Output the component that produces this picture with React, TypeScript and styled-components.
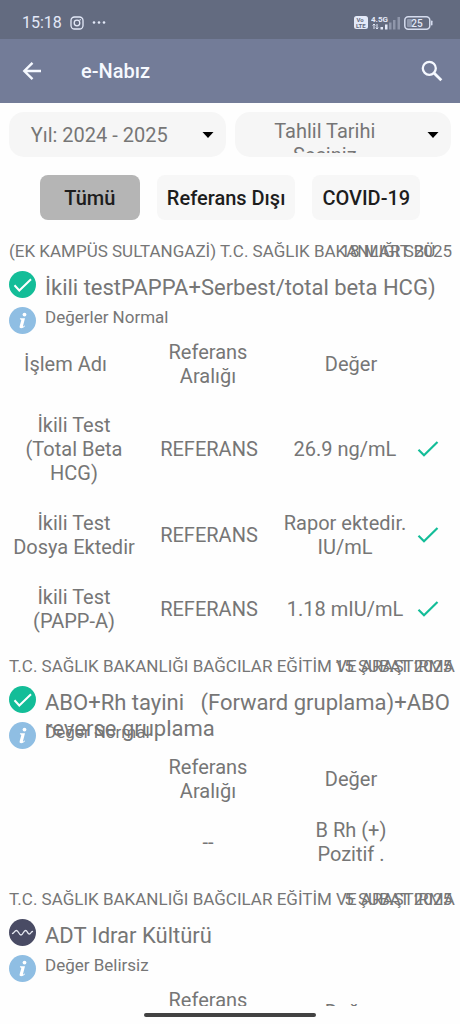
import React from "react";
import styled, { createGlobalStyle } from "styled-components";

const GlobalStyle = createGlobalStyle`
  *, *::before, *::after { box-sizing: border-box; }
  body { margin: 0; background: #fefefe; font-family: Roboto, "Noto Sans", sans-serif; color: #767676; }
  button, select { font-family: inherit; }
`;

const Screen = styled.div`
  display: flex;
  flex-direction: column;
  height: 100vh;
`;

const StatusBar = styled.div`
  display: flex;
  align-items: center;
  justify-content: space-between;
  flex: none;
  height: 39px;
  padding: 6px 27px 0 22px;
  background: #636b80;
  color: #e3e9f8;
`;

const StatusGroup = styled.div<{ $gap: number }>`
  display: flex;
  align-items: center;
  gap: ${(p) => p.$gap}px;
`;

const Clock = styled.span`
  font-size: 16px;
  font-weight: 400;
  line-height: 20px;
`;

const AppBar = styled.header`
  display: flex;
  align-items: center;
  flex: none;
  height: 64px;
  padding: 0 16px 0 20px;
  background: #737c98;
  color: #f6f9ff;
`;

const IconButton = styled.button`
  display: flex;
  padding: 0;
  border: 0;
  background: none;
  color: inherit;
`;

const AppTitle = styled.h1`
  flex: 1;
  margin: 0 0 0 37px;
  font-size: 20px;
  font-weight: 500;
  line-height: 24px;
`;

const Content = styled.main`
  flex: 1;
  min-height: 0;
  overflow-y: auto;
  scrollbar-width: none;
`;

const Filters = styled.div`
  display: flex;
  gap: 9px;
  padding: 9px 9px 0;
`;

const SelectField = styled.label`
  position: relative;
  display: flex;
  align-items: center;
  gap: 20px;
  flex: 1;
  height: 45px;
  padding: 0 12px 0 8px;
  border-radius: 15px;
  background: #f6f6f6;
`;

const SelectText = styled.span<{ $lines: number }>`
  flex: 1;
  height: ${(p) => (p.$lines > 1 ? 36 : 24)}px;
  padding-top: ${(p) => (p.$lines > 1 ? 2 : 0)}px;
  overflow: hidden;
  font-size: 20px;
  line-height: 24px;
  text-align: center;
  white-space: pre-line;
`;

const NativeSelect = styled.select`
  position: absolute;
  inset: 0;
  width: 100%;
  opacity: 0;
`;

const Tabs = styled.div`
  display: flex;
  justify-content: center;
  gap: 17px;
  padding: 18px 9px 21px;
`;

const Tab = styled.button<{ $active?: boolean }>`
  height: 45px;
  min-width: 100px;
  padding: 0 10px;
  border: 0;
  border-radius: 8px;
  background: ${(p) => (p.$active ? "#b5b5b5" : "#f7f7f7")};
  color: #1d1d1d;
  font-size: 20px;
  font-weight: 500;
  line-height: 24px;
`;

const Result = styled.section`
  margin-bottom: 23px;
`;

const Source = styled.div`
  position: relative;
  padding: 0 7px 0 9px;
  font-size: 17px;
  line-height: 20px;
`;

const Hospital = styled.div`
  white-space: nowrap;
`;

const ResultDate = styled.time`
  position: absolute;
  top: 0;
  right: 8px;
`;

const Summary = styled.div`
  display: grid;
  grid-template-columns: 27px 1fr;
  grid-template-rows: 27px 27px;
  gap: 9px;
  padding: 10px 0 6px 9px;
`;

const TestName = styled.h2`
  margin: 0;
  padding-top: 4px;
  font-size: 22px;
  font-weight: 400;
  line-height: 26px;
  white-space: pre-wrap;
`;

const TestStatus = styled.p`
  margin: 0;
  font-size: 17px;
  line-height: 20px;
`;

const Table = styled.table`
  display: block;
  padding: 0 9px;
  font-size: 20px;
  line-height: 24px;
`;

const Head = styled.thead`
  display: block;
`;

const Body = styled.tbody<{ $gap: number }>`
  display: flex;
  flex-direction: column;
  gap: ${(p) => p.$gap}px;
  padding-top: ${(p) => p.$gap - 1}px;
`;

const Row = styled.tr<{ $wide?: boolean }>`
  display: grid;
  align-items: center;
  grid-template-columns: ${(p) => (p.$wide ? "113fr 172fr 114fr 43fr" : "130fr 140fr 132fr 40fr")};
`;

const HeadCell = styled.th`
  padding: 0;
  font-weight: 400;
  text-align: center;
  white-space: pre-line;
`;

const Cell = styled.td`
  padding: 0;
  text-align: center;
  white-space: pre-line;
`;

const CheckCell = styled.td`
  display: flex;
  justify-content: center;
  padding: 0 6px 0 0;
`;

const NavBar = styled.div`
  display: flex;
  justify-content: center;
  flex: none;
  height: 18px;
  padding-top: 7px;
`;

const HomeHandle = styled.div`
  width: 172px;
  height: 4px;
  border-radius: 2px;
  background: #424242;
`;

const InstagramIcon = () => (
  <svg width="14" height="14" viewBox="0 0 14 14" fill="none" stroke="currentColor" strokeWidth="1.3">
    <rect x="1" y="1" width="12" height="12" rx="3.5" />
    <circle cx="7" cy="7" r="2.8" />
    <circle cx="10.2" cy="3.8" r="0.7" fill="currentColor" stroke="none" />
  </svg>
);

const MoreIcon = () => (
  <svg width="14" height="14" viewBox="0 0 14 14" fill="currentColor">
    <circle cx="2" cy="6.5" r="1.3" />
    <circle cx="7" cy="6.5" r="1.3" />
    <circle cx="12" cy="6.5" r="1.3" />
  </svg>
);

const VolteIcon = () => (
  <svg width="14" height="13" viewBox="0 0 14 13">
    <rect width="14" height="13" rx="2.5" fill="#e3e9f8" />
    <text x="2.5" y="6" fontSize="6" fontWeight="700" fill="#636b80">Vo</text>
    <text x="2" y="11.5" fontSize="6" fontWeight="700" fill="#636b80">LTE</text>
  </svg>
);

const SignalIcon = () => (
  <svg width="30" height="14" viewBox="0 0 30 14" fill="#e3e9f8">
    <rect x="9.5" y="11" width="2.5" height="2.5" />
    <rect x="14" y="8.5" width="2.5" height="5" />
    <rect x="18" y="6.5" width="2.5" height="7" opacity=".35" />
    <rect x="22" y="4" width="2.5" height="9.5" opacity=".35" />
    <rect x="26.5" y="1" width="2.5" height="12.5" opacity=".35" />
    <text x="0" y="6" fontSize="8" fontWeight="700">4.5G</text>
    <path d="M3 8v5M1.6 9.4 3 8l1.4 1.4M6 8v5M4.8 11.6 6 13l1.2-1.4" stroke="#e3e9f8" strokeWidth="1" fill="none" />
  </svg>
);

const BatteryIcon = () => (
  <svg width="29" height="14" viewBox="0 0 29 14">
    <rect x="0.8" y="0.8" width="25" height="12.4" rx="3.5" fill="none" stroke="#d5dcee" strokeWidth="1.5" />
    <rect x="3" y="3" width="5" height="8" rx="1" fill="#9098ac" />
    <rect x="27" y="4.5" width="1.5" height="5" rx="0.7" fill="#d5dcee" />
    <text x="13" y="10.5" fontSize="10" fontWeight="500" fill="#e3e9f8" textAnchor="middle">25</text>
  </svg>
);

const BackIcon = () => (
  <svg width="24" height="24" viewBox="0 0 24 24" fill="none" stroke="currentColor" strokeWidth="2.4">
    <path d="M21 12H4.5M12.5 3.8 4.3 12l8.2 8.2" />
  </svg>
);

const SearchIcon = () => (
  <svg width="24" height="24" viewBox="0 0 24 24" fill="none" stroke="currentColor" strokeWidth="2.3">
    <circle cx="9.3" cy="9.3" r="6.5" />
    <path d="m14 14 7.3 7.3" strokeWidth="2.8" />
  </svg>
);

const CaretIcon = () => (
  <svg width="12" height="6" viewBox="0 0 12 6">
    <path d="M0.5 0h11L6 6z" fill="#000" />
  </svg>
);

const NormalIcon = () => (
  <svg width="27" height="27" viewBox="0 0 27 27">
    <circle cx="13.5" cy="13.5" r="13.5" fill="#13bd98" />
    <path d="m5.500 14.300 4.800 5.200L22 8.300" fill="none" stroke="#fff" strokeWidth="2" />
  </svg>
);

const UncertainIcon = () => (
  <svg width="27" height="27" viewBox="0 0 27 27">
    <circle cx="13.5" cy="13.5" r="13.5" fill="#494b64" />
    <path
      d="M3.5 14.500c1.500 0 2-3 4-3s2.500 4.500 4.500 4.500 2.500-4.500 4.500-4.500 2 3.500 3.800 3.500 1.500-2.500 3.200-2.500"
      fill="none"
      stroke="#e6e9f3"
      strokeWidth="1.3"
      strokeLinecap="round"
    />
  </svg>
);

const InfoIcon = () => (
  <svg width="27" height="27" viewBox="0 0 27 27">
    <circle cx="13.5" cy="13.5" r="13.5" fill="#8fbee3" />
    <circle cx="15.5" cy="7.6" r="1.9" fill="#fff" />
    <path
      d="M11 11.300h5l-2 7.600c-.2.800.3.900 1.600-.3l.5.500c-1.400 1.600-2.700 2.200-3.900 2.200-1.300 0-1.900-.8-1.500-2.200l1.500-5.600c.2-.8-.1-1.200-1.300-1.300z"
      fill="#fff"
    />
  </svg>
);

const CheckIcon = () => (
  <svg width="22" height="18" viewBox="0 0 22 18" fill="none" stroke="#13bd98" strokeWidth="2.2">
    <path d="m1.500 9.800 5.500 5.500L20.500 2" />
  </svg>
);

type TestRow = { name?: string; range: string; value: string; ok?: boolean };
type TestResult = {
  hospital: string;
  date: string;
  iso: string;
  name: string;
  status: string;
  normal: boolean;
  nameHeader?: string;
  gap: number;
  rows: TestRow[];
};

const results: TestResult[] = [
  {
    hospital: "(EK KAMPÜS SULTANGAZİ) T.C. SAĞLIK BAKANLIĞI SBÜ",
    date: "18 MART 2025",
    iso: "2025-03-18",
    name: "İkili testPAPPA+Serbest/total beta HCG)",
    status: "Değerler Normal",
    normal: true,
    nameHeader: "İşlem Adı",
    gap: 26,
    rows: [
      { name: "İkili Test\n(Total Beta\nHCG)", range: "REFERANS", value: "26.9 ng/mL", ok: true },
      { name: "İkili Test\nDosya Ektedir", range: "REFERANS", value: "Rapor ektedir.\nIU/mL", ok: true },
      { name: "İkili Test\n(PAPP-A)", range: "REFERANS", value: "1.18 mIU/mL", ok: true },
    ],
  },
  {
    hospital: "T.C. SAĞLIK BAKANLIĞI BAĞCILAR EĞİTİM VE ARAŞTIRMA",
    date: "15 ŞUBAT 2025",
    iso: "2025-02-15",
    name: "ABO+Rh tayini   (Forward gruplama)+ABO reverse gruplama",
    status: "Değer Normal",
    normal: true,
    gap: 16,
    rows: [{ range: "--", value: "B Rh (+)\nPozitif ." }],
  },
  {
    hospital: "T.C. SAĞLIK BAKANLIĞI BAĞCILAR EĞİTİM VE ARAŞTIRMA",
    date: "5 ŞUBAT 2025",
    iso: "2025-02-05",
    name: "ADT Idrar Kültürü",
    status: "Değer Belirsiz",
    normal: false,
    gap: 16,
    rows: [],
  },
];

const Filter = ({ label, text, lines }: { label: string; text: string; lines: number }) => (
  <SelectField>
    <SelectText $lines={lines}>{text}</SelectText>
    <CaretIcon />
    <NativeSelect aria-label={label}>
      <option>{text}</option>
    </NativeSelect>
  </SelectField>
);

const ResultCard = ({ result }: { result: TestResult }) => (
  <Result>
    <Source>
      <Hospital>{result.hospital}</Hospital>
      <ResultDate dateTime={result.iso}>{result.date}</ResultDate>
    </Source>
    <Summary>
      {result.normal ? <NormalIcon /> : <UncertainIcon />}
      <TestName>{result.name}</TestName>
      <InfoIcon />
      <TestStatus>{result.status}</TestStatus>
    </Summary>
    <Table>
      <Head>
        <Row $wide>
          <HeadCell scope="col">{result.nameHeader}</HeadCell>
          <HeadCell scope="col">{"Referans\nAralığı"}</HeadCell>
          <HeadCell scope="col">Değer</HeadCell>
        </Row>
      </Head>
      <Body $gap={result.gap}>
        {result.rows.map((row) => (
          <Row key={row.value} $wide={!row.name}>
            <Cell>{row.name}</Cell>
            <Cell>{row.range}</Cell>
            <Cell>{row.value}</Cell>
            {row.ok && (
              <CheckCell>
                <CheckIcon />
              </CheckCell>
            )}
          </Row>
        ))}
      </Body>
    </Table>
  </Result>
);

export default function App() {
  return (
    <Screen>
      <GlobalStyle />
      <StatusBar>
        <StatusGroup $gap={8}>
          <Clock>15:18</Clock>
          <InstagramIcon />
          <MoreIcon />
        </StatusGroup>
        <StatusGroup $gap={3}>
          <VolteIcon />
          <SignalIcon />
          <BatteryIcon />
        </StatusGroup>
      </StatusBar>
      <AppBar>
        <IconButton aria-label="Geri">
          <BackIcon />
        </IconButton>
        <AppTitle>e-Nabız</AppTitle>
        <IconButton aria-label="Ara">
          <SearchIcon />
        </IconButton>
      </AppBar>
      <Content>
        <Filters>
          <Filter label="Yıl" text="Yıl: 2024 - 2025" lines={1} />
          <Filter label="Tahlil Tarihi" text={"Tahlil Tarihi\nSeçiniz"} lines={2} />
        </Filters>
        <Tabs>
          <Tab $active aria-pressed="true">Tümü</Tab>
          <Tab>Referans Dışı</Tab>
          <Tab>COVID-19</Tab>
        </Tabs>
        {results.map((result) => (
          <ResultCard key={result.date} result={result} />
        ))}
      </Content>
      <NavBar>
        <HomeHandle />
      </NavBar>
    </Screen>
  );
}
